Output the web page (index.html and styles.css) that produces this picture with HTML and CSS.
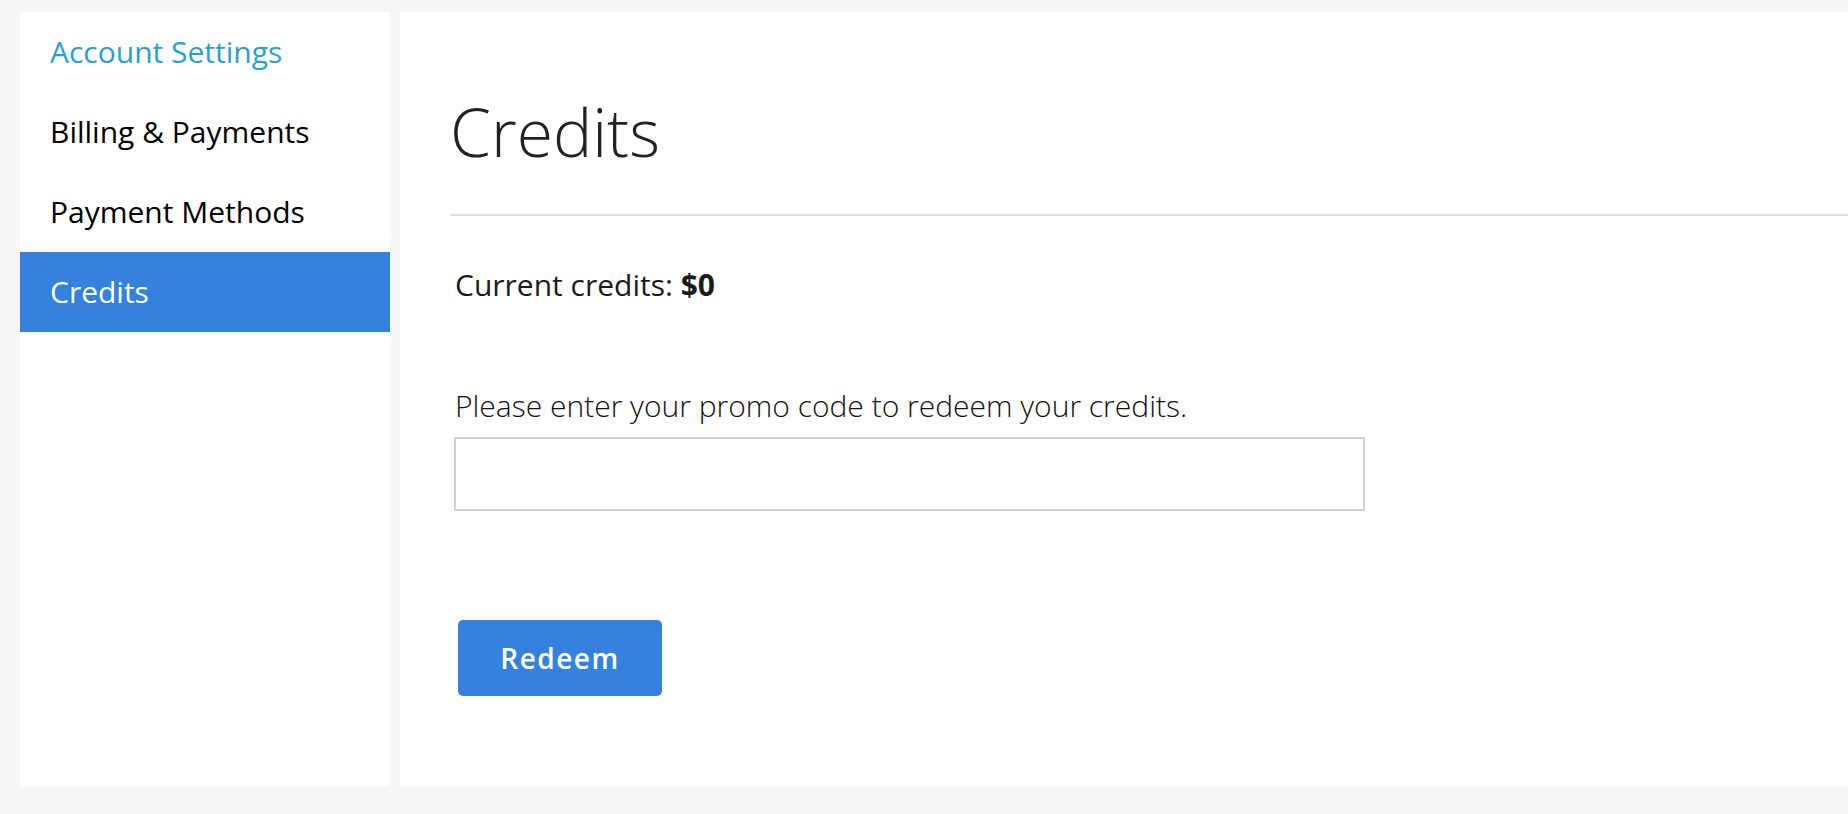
FILE: index.html
```html
<!DOCTYPE html>
<html lang="en">
<head>
<meta charset="utf-8">
<title>Credits</title>
<link rel="stylesheet" href="styles.css">
</head>
<body>
<div class="page">
  <nav class="sidebar">
    <a class="nav-item nav-title" href="#">Account Settings</a>
    <a class="nav-item" href="#">Billing &amp; Payments</a>
    <a class="nav-item" href="#">Payment Methods</a>
    <a class="nav-item active" href="#">Credits</a>
  </nav>
  <main class="content">
    <h1 class="heading">Credits</h1>
    <hr class="divider">
    <p class="current">Current credits: <strong>$0</strong></p>
    <label class="promo-label" for="promo">Please enter your promo code to redeem your credits.</label>
    <input class="promo-input" id="promo" type="text">
    <button class="btn" type="button">Redeem</button>
  </main>
</div>
</body>
</html>
```

FILE: styles.css
```css
* { box-sizing: border-box; }
html, body { margin: 0; padding: 0; }
body {
  background: #f7f7f7;
  font-family: "Open Sans", "Liberation Sans", sans-serif;
  color: #1a1a1a;
}
.page {
  display: flex;
  gap: 10px;
  padding: 12px 0 28px 20px;
  height: 814px;
}
.sidebar {
  width: 370px;
  background: #fff;
  display: flex;
  flex-direction: column;
}
.nav-item {
  display: block;
  height: 80px;
  line-height: 80px;
  padding-left: 30px;
  font-size: 30px;
  color: #000;
  text-decoration: none;
}
.nav-title { color: #2a9fd0; }
.nav-item.active { background: #3581de; color: #fff; }
.content {
  flex: 1;
  background: #fff;
  padding: 0 0 0 50px;
  display: flex;
  flex-direction: column;
  align-items: flex-start;
}
.heading {
  margin: 74px 0 0 0;
  font-size: 66px;
  font-weight: 300;
  line-height: 90px;
  color: #222;
}
.divider {
  align-self: stretch;
  margin: 38px 0 0;
  border: 0;
  height: 2px;
  background: #e0e0e0;
}
.current {
  margin: 49px 0 0 5px;
  font-size: 30px;
  line-height: 40px;
}
.current strong { font-weight: 700; }
.promo-label {
  margin: 81px 0 0 5px;
  font-size: 30px;
  font-weight: 300;
  line-height: 40px;
  color: #111;
}
.promo-input {
  margin: 11px 0 0 4px;
  width: 911px;
  height: 74px;
  border: 2px solid #d2d2d2;
  background: #fff;
  outline: none;
}
.btn {
  margin: 109px 0 0 8px;
  width: 204px;
  height: 76px;
  border: 0;
  border-radius: 5px;
  background: #3581de;
  color: #fff;
  font-family: "Open Sans", "Liberation Sans", sans-serif;
  font-size: 28px;
  font-weight: 600;
  letter-spacing: 1.5px;
}
```
